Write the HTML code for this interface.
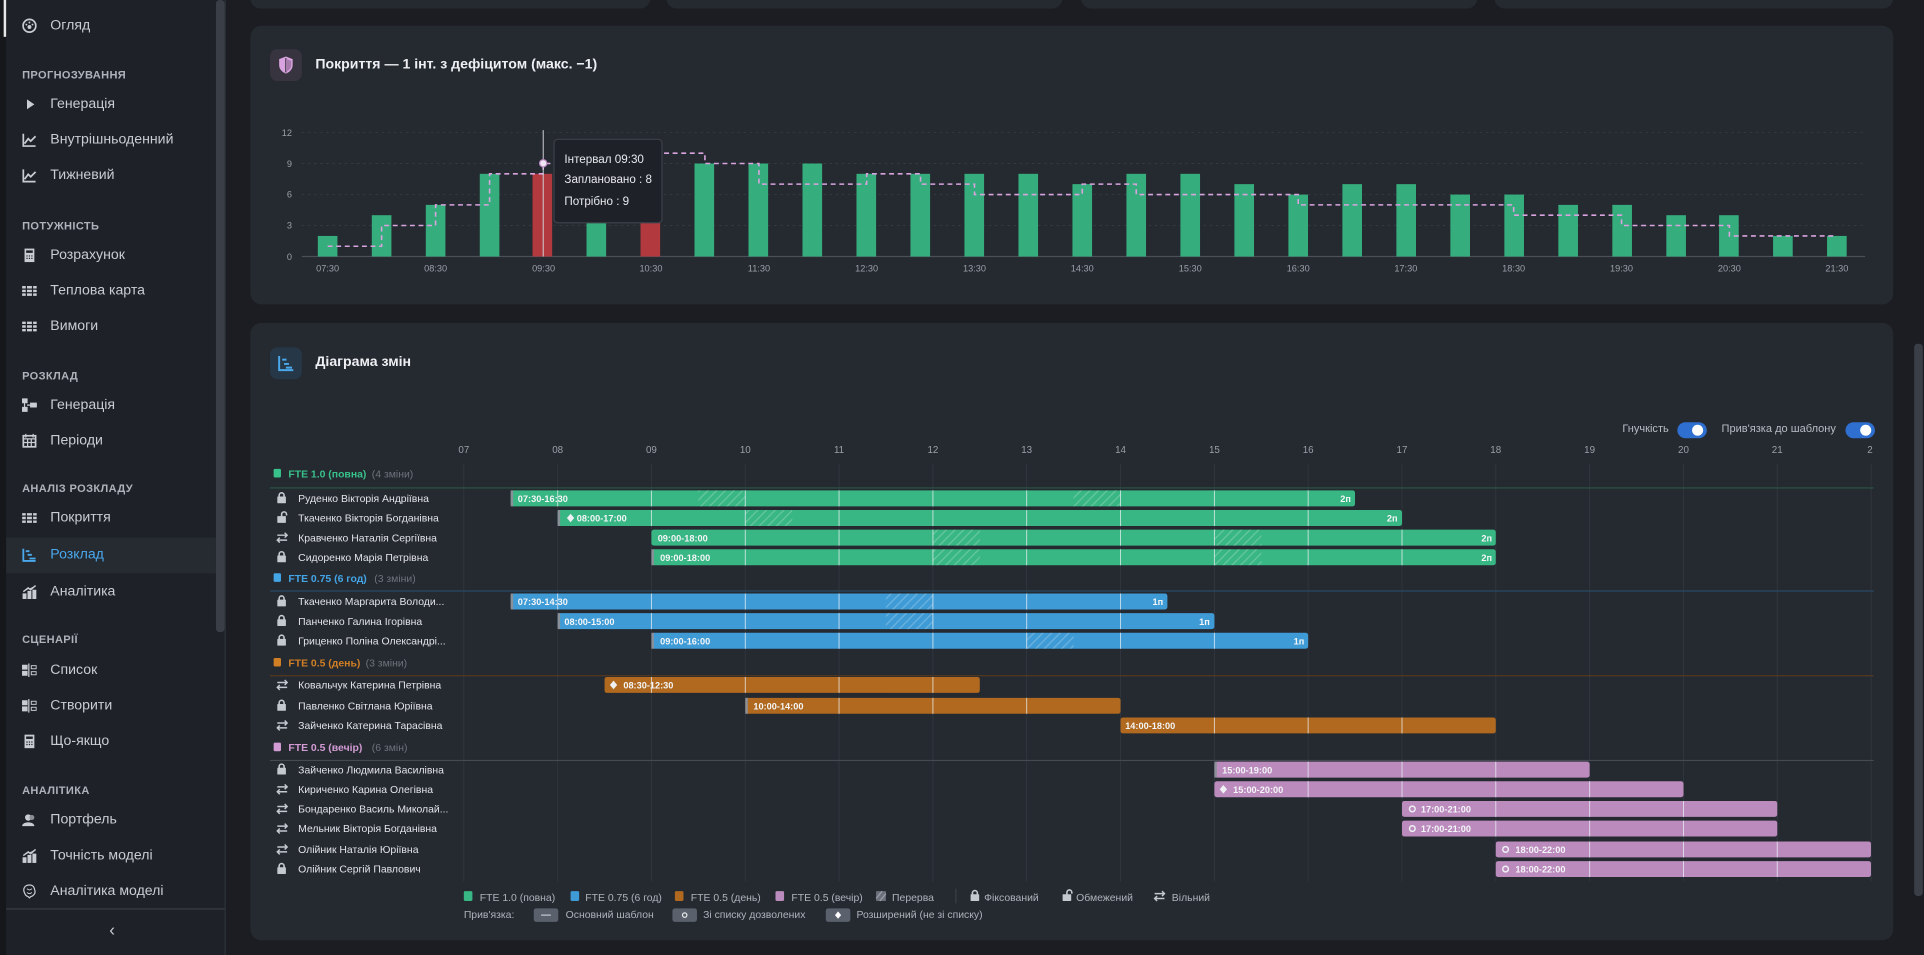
<!DOCTYPE html>
<html><head><meta charset="utf-8">
<style>
html,body{margin:0;padding:0;width:1924px;height:955px;overflow:hidden;background:#1b1d22;font-family:"Liberation Sans","DejaVu Sans",sans-serif;}
#s{position:absolute;left:0;top:0;width:1568px;height:778px;transform:scale(1.22704,1.2275);transform-origin:0 0;}
.sb{position:absolute;left:5px;top:0;width:179px;height:778px;background:#1e2128;}
.it{position:absolute;left:41px;font-size:11.5px;color:#c9ccd2;line-height:14px;}
.hd{position:absolute;left:18px;font-size:9px;font-weight:bold;color:#aeb2ba;letter-spacing:0.3px;}
.ic{position:absolute;left:18px;width:12px;height:12px;}
.card{position:absolute;background:#252930;border-radius:9px;}
</style></head><body>
<div id="s">
<div style="position:absolute;left:0;top:0;width:5px;height:778px;background:#15171b"></div>
<div class="sb"></div>
<div style="position:absolute;left:3px;top:0;width:2px;height:30px;background:#e8e8e8"></div>
<div style="position:absolute;left:176px;top:0;width:7px;height:515px;background:#3a3e46;border-radius:3px"></div>
<div style="position:absolute;left:183px;top:0;width:1px;height:778px;background:#2e3239"></div>
<!-- sidebar items -->
<svg class="ic" style="top:15px" viewBox="0 0 12 12"><circle cx="6" cy="6" r="5.2" fill="none" stroke="#c9ccd2" stroke-width="1.4"/><circle cx="6" cy="7" r="1.6" fill="#c9ccd2"/><circle cx="3.5" cy="5" r=".8" fill="#c9ccd2"/><circle cx="6" cy="3.3" r=".8" fill="#c9ccd2"/><circle cx="8.5" cy="5" r=".8" fill="#c9ccd2"/></svg>
<div class="it" style="top:14px">Огляд</div>
<div class="hd" style="top:56px">ПРОГНОЗУВАННЯ</div>
<svg class="ic" style="top:79px" viewBox="0 0 12 12"><path d="M4 2L10 6L4 10Z" fill="#c9ccd2"/></svg>
<div class="it" style="top:78px">Генерація</div>
<svg class="ic" style="top:108px" viewBox="0 0 12 12"><path d="M1 1V11H11M2 9L5 5L7 7L11 3" fill="none" stroke="#c9ccd2" stroke-width="1.4"/></svg>
<div class="it" style="top:107px">Внутрішньоденний</div>
<svg class="ic" style="top:137px" viewBox="0 0 12 12"><path d="M1 1V11H11M2 9L5 5L7 7L11 3" fill="none" stroke="#c9ccd2" stroke-width="1.4"/></svg>
<div class="it" style="top:136px">Тижневий</div>
<div class="hd" style="top:179px">ПОТУЖНІСТЬ</div>
<svg class="ic" style="top:202px" viewBox="0 0 12 12"><rect x="2" y="0.5" width="8" height="11" fill="#c9ccd2"/><rect x="3.3" y="2" width="5.4" height="2" fill="#1e2128"/><path d="M3.5 6h1v1h-1zM5.5 6h1v1h-1zM7.5 6h1v1h-1zM3.5 8h1v1h-1zM5.5 8h1v1h-1zM7.5 8h1v1h-1z" fill="#1e2128"/></svg>
<div class="it" style="top:201px">Розрахунок</div>
<svg class="ic" style="top:231px" viewBox="0 0 12 12"><path d="M0 2h3v2H0zM4 2h4v2H4zM9 2h3v2H9zM0 5h3v2H0zM4 5h4v2H4zM9 5h3v2H9zM0 8h3v2H0zM4 8h4v2H4zM9 8h3v2H9z" fill="#c9ccd2"/></svg>
<div class="it" style="top:230px">Теплова карта</div>
<svg class="ic" style="top:260px" viewBox="0 0 12 12"><path d="M0 2h3v2H0zM4 2h4v2H4zM9 2h3v2H9zM0 5h3v2H0zM4 5h4v2H4zM9 5h3v2H9zM0 8h3v2H0zM4 8h4v2H4zM9 8h3v2H9z" fill="#c9ccd2"/></svg>
<div class="it" style="top:259px">Вимоги</div>
<div class="hd" style="top:301px">РОЗКЛАД</div>
<svg class="ic" style="top:324px" viewBox="0 0 12 12"><path d="M0 1h4v3H0zM0 8h4v3H0zM7 4.5h5v3H7zM2 4v4M4 6h3" fill="#c9ccd2" stroke="#c9ccd2"/></svg>
<div class="it" style="top:323px">Генерація</div>
<svg class="ic" style="top:353px" viewBox="0 0 12 12"><rect x="1" y="2" width="10" height="9" fill="none" stroke="#c9ccd2" stroke-width="1.4"/><path d="M1 4.5h10M3 0.5v3M9 0.5v3M4.5 4v7M7.5 4v7M1 7.5h10" stroke="#c9ccd2"/></svg>
<div class="it" style="top:352px">Періоди</div>
<div class="hd" style="top:393px">АНАЛІЗ РОЗКЛАДУ</div>
<svg class="ic" style="top:416px" viewBox="0 0 12 12"><path d="M0 2h3v2H0zM4 2h4v2H4zM9 2h3v2H9zM0 5h3v2H0zM4 5h4v2H4zM9 5h3v2H9zM0 8h3v2H0zM4 8h4v2H4zM9 8h3v2H9z" fill="#c9ccd2"/></svg>
<div class="it" style="top:415px">Покриття</div>
<div style="position:absolute;left:5px;top:438px;width:171px;height:29px;background:#262a31"></div>
<svg class="ic" style="top:446px" viewBox="0 0 12 12"><path d="M1 1V11H11M3 3h3M4.5 6h3.5M6 9h5" fill="none" stroke="#4aa8ec" stroke-width="1.5"/></svg>
<div class="it" style="top:445px;color:#4aa8ec">Розклад</div>
<svg class="ic" style="top:476px" viewBox="0 0 12 12"><path d="M1 12V8h2v4zM5 12V6h2v6zM9 12V5h2v7zM1 6L5 3L7 4.5L11 1" fill="#c9ccd2" stroke="#c9ccd2" stroke-width="1.2"/></svg>
<div class="it" style="top:475px">Аналітика</div>
<div class="hd" style="top:516px">СЦЕНАРІЇ</div>
<svg class="ic" style="top:540px" viewBox="0 0 12 12"><path d="M0 2h4v3H0zM0 7h4v3H0zM5.5 0.5v11" fill="#c9ccd2" stroke="#c9ccd2"/><rect x="7.5" y="2.3" width="4" height="2.5" fill="none" stroke="#c9ccd2" stroke-width=".8"/><rect x="7.5" y="7.2" width="4" height="2.5" fill="none" stroke="#c9ccd2" stroke-width=".8"/></svg>
<div class="it" style="top:539px">Список</div>
<svg class="ic" style="top:569px" viewBox="0 0 12 12"><path d="M0 2h4v3H0zM0 7h4v3H0zM5.5 0.5v11" fill="#c9ccd2" stroke="#c9ccd2"/><rect x="7.5" y="2.3" width="4" height="2.5" fill="none" stroke="#c9ccd2" stroke-width=".8"/><rect x="7.5" y="7.2" width="4" height="2.5" fill="none" stroke="#c9ccd2" stroke-width=".8"/></svg>
<div class="it" style="top:568px">Створити</div>
<svg class="ic" style="top:598px" viewBox="0 0 12 12"><rect x="2" y="0.5" width="8" height="11" fill="#c9ccd2"/><rect x="3.3" y="2" width="5.4" height="2" fill="#1e2128"/><path d="M3.5 6h1v1h-1zM5.5 6h1v1h-1zM7.5 6h1v1h-1zM3.5 8h1v1h-1zM5.5 8h1v1h-1zM7.5 8h1v1h-1z" fill="#1e2128"/></svg>
<div class="it" style="top:597px">Що-якщо</div>
<div class="hd" style="top:639px">АНАЛІТИКА</div>
<svg class="ic" style="top:662px" viewBox="0 0 12 12"><circle cx="5" cy="4" r="2.6" fill="#c9ccd2"/><path d="M0 11c0-4 10-4 10 0z" fill="#c9ccd2"/><circle cx="8" cy="4" r="2" fill="#8a8e96"/></svg>
<div class="it" style="top:661px">Портфель</div>
<svg class="ic" style="top:691px" viewBox="0 0 12 12"><path d="M1 12V8h2v4zM5 12V6h2v6zM9 12V5h2v7zM1 6L5 3L7 4.5L11 1" fill="#c9ccd2" stroke="#c9ccd2" stroke-width="1.2"/></svg>
<div class="it" style="top:690px">Точність моделі</div>
<svg class="ic" style="top:720px" viewBox="0 0 12 12"><path d="M6 1C2 1 1 4 1.5 6S3 10 5 10.5L6 11.5L7 10.5C9 10 11 8 10.5 6S10 1 6 1Z" fill="none" stroke="#c9ccd2"/><path d="M4 4Q6 6 8 4M4 7Q6 9 8 7" fill="none" stroke="#c9ccd2" stroke-width=".7"/></svg>
<div class="it" style="top:719px">Аналітика моделі</div>
<div style="position:absolute;left:5px;top:740px;width:178px;height:1px;background:#3a3e46"></div>
<div style="position:absolute;left:89px;top:749px;font-size:14px;color:#c9ccd2">‹</div>

<!-- top cards -->
<div class="card" style="left:204px;top:-10px;width:326px;height:17px"></div>
<div class="card" style="left:543px;top:-10px;width:323px;height:17px"></div>
<div class="card" style="left:881px;top:-10px;width:323px;height:17px"></div>
<div class="card" style="left:1218px;top:-10px;width:325px;height:17px"></div>

<!-- coverage card -->
<div class="card" style="left:204px;top:21px;width:1339px;height:227px"></div>
<div style="position:absolute;left:220px;top:40px;width:26px;height:26px;border-radius:6px;background:#37343f"></div>
<svg style="position:absolute;left:226px;top:45px" width="14" height="16" viewBox="0 0 14 16"><path d="M7 1L1.5 3.2V8c0 3.5 2.5 5.8 5.5 7 3-1.2 5.5-3.5 5.5-7V3.2Z" fill="#d9a3df"/><path d="M7 2.5V14" stroke="#37343f" stroke-width="1.2"/><path d="M7 3L11.3 4.5V8C11.3 10.6 9.6 12.5 7 13.6Z" fill="#a77aac"/></svg>
<div style="position:absolute;left:257px;top:47px;font-size:11.5px;font-weight:bold;color:#eef0f3">Покриття — 1 інт. з дефіцитом (макс. −1)</div>
<svg style="position:absolute;left:0;top:0" width="1568" height="260" viewBox="0 0 1568 260">
<g stroke="#353a42" stroke-width="0.8" stroke-dasharray="2 3">
<line x1="246" y1="108" x2="1520" y2="108"/><line x1="246" y1="133.2" x2="1520" y2="133.2"/><line x1="246" y1="158.5" x2="1520" y2="158.5"/><line x1="246" y1="183.7" x2="1520" y2="183.7"/></g>
<line x1="246" y1="209" x2="1520" y2="209" stroke="#4a4f58" stroke-width="1"/>
<g font-size="7.5" fill="#9aa0a8" text-anchor="end"><text x="238" y="111">12</text><text x="238" y="136">9</text><text x="238" y="161">6</text><text x="238" y="186">3</text><text x="238" y="212">0</text></g>
<g fill="#36ad7c">
<rect x="259" y="192.2" width="16" height="16.8"/>
<rect x="303" y="175.3" width="16" height="33.7"/>
<rect x="347" y="166.9" width="16" height="42.1"/>
<rect x="391" y="141.6" width="16" height="67.4"/>
<rect x="478" y="124.8" width="16" height="84.2"/>
<rect x="566" y="133.2" width="16" height="75.8"/>
<rect x="610" y="133.2" width="16" height="75.8"/>
<rect x="654" y="133.2" width="16" height="75.8"/>
<rect x="698" y="141.6" width="16" height="67.4"/>
<rect x="742" y="141.6" width="16" height="67.4"/>
<rect x="786" y="141.6" width="16" height="67.4"/>
<rect x="830" y="141.6" width="16" height="67.4"/>
<rect x="874" y="150" width="16" height="59"/>
<rect x="918" y="141.6" width="16" height="67.4"/>
<rect x="962" y="141.6" width="16" height="67.4"/>
<rect x="1006" y="150" width="16" height="59"/>
<rect x="1050" y="158.5" width="16" height="50.5"/>
<rect x="1094" y="150" width="16" height="59"/>
<rect x="1138" y="150" width="16" height="59"/>
<rect x="1182" y="158.5" width="16" height="50.5"/>
<rect x="1226" y="158.5" width="16" height="50.5"/>
<rect x="1270" y="166.9" width="16" height="42.1"/>
<rect x="1314" y="166.9" width="16" height="42.1"/>
<rect x="1358" y="175.3" width="16" height="33.7"/>
<rect x="1401" y="175.3" width="16" height="33.7"/>
<rect x="1445" y="192.2" width="16" height="16.8"/>
<rect x="1489" y="192.2" width="16" height="16.8"/>
</g>
<g fill="#b23a3e"><rect x="434" y="141.6" width="16" height="67.4"/><rect x="522" y="133.2" width="16" height="75.8"/></g>
<path d="M267 200.6H311V183.7H355V166.9H399V141.6H442.7V133.2H486.7V124.8H574.5V133.2H618.5V150H706.3V141.6H750.2V150H794.2V158.5H882V150H926V158.5H1058V166.9H1233.6V175.3H1321.5V183.7H1409.4V192.2H1497" fill="none" stroke="#d9a3df" stroke-width="1.3" stroke-dasharray="4 3"/>
<g font-size="7.5" fill="#9aa0a8" text-anchor="middle">
<text x="267" y="221">07:30</text><text x="355" y="221">08:30</text><text x="443" y="221">09:30</text><text x="530.5" y="221">10:30</text><text x="618.5" y="221">11:30</text><text x="706.3" y="221">12:30</text><text x="794.2" y="221">13:30</text><text x="882" y="221">14:30</text><text x="970" y="221">15:30</text><text x="1058" y="221">16:30</text><text x="1145.7" y="221">17:30</text><text x="1233.6" y="221">18:30</text><text x="1321.5" y="221">19:30</text><text x="1409.4" y="221">20:30</text><text x="1497" y="221">21:30</text></g>
<line x1="442.7" y1="106" x2="442.7" y2="209" stroke="#d0d3d8" stroke-width="0.8"/>
<circle cx="442.7" cy="133" r="3" fill="#f1e6f3" stroke="#b888c0" stroke-width="1"/>
<rect x="451.5" y="113.5" width="88" height="68" rx="3" fill="#1e2128" stroke="#3c4049"/>
<g font-size="9.5" fill="#e8eaee"><text x="460" y="133">Інтервал 09:30</text><text x="460" y="149">Заплановано : 8</text><text x="460" y="167">Потрібно : 9</text></g>
</svg>

<!-- gantt card -->
<div class="card" style="left:204px;top:263px;width:1339px;height:503px"></div>
<div style="position:absolute;left:220px;top:283px;width:26px;height:26px;border-radius:6px;background:#263747"></div>
<svg style="position:absolute;left:226px;top:289px" width="14" height="14" viewBox="0 0 14 14"><path d="M1.5 1V12.5H13M4 4h3.5M5.5 7.5h4M7 10.5h5" fill="none" stroke="#4aa8ec" stroke-width="1.6"/></svg>
<div style="position:absolute;left:257px;top:289px;font-size:11.5px;font-weight:bold;color:#eef0f3">Діаграма змін</div>
<div style="position:absolute;left:1290px;top:344px;font-size:9px;color:#b8bcc4;width:70px;text-align:right">Гнучкість</div>
<div style="position:absolute;left:1367px;top:344px;width:24px;height:13px;border-radius:7px;background:#2f6fd0"></div>
<div style="position:absolute;left:1379px;top:346px;width:9px;height:9px;border-radius:5px;background:#fff"></div>
<div style="position:absolute;left:1403px;top:344px;font-size:9px;color:#b8bcc4">Прив'язка до шаблону</div>
<div style="position:absolute;left:1504px;top:344px;width:24px;height:13px;border-radius:7px;background:#2f6fd0"></div>
<div style="position:absolute;left:1516px;top:346px;width:9px;height:9px;border-radius:5px;background:#fff"></div>

<svg style="position:absolute;left:0;top:0" width="1568" height="778" viewBox="0 0 1568 778">
<defs>
<pattern id="h" width="5" height="5" patternUnits="userSpaceOnUse" patternTransform="rotate(45)"><rect width="5" height="5" fill="rgba(255,255,255,0.0)"/><line x1="0" y1="0" x2="0" y2="5" stroke="rgba(255,255,255,0.22)" stroke-width="2.2"/></pattern>
<g id="lk"><rect x="0" y="3.5" width="7" height="5.5" rx=".5" fill="#c4c8cf"/><path d="M1.5 4V2.5a2 2 0 0 1 4 0V4" fill="none" stroke="#c4c8cf" stroke-width="1.3"/></g>
<g id="ul"><rect x="0" y="3.5" width="7" height="5.5" rx=".5" fill="#c4c8cf"/><path d="M3.5 4V2a2 2 0 0 1 4 0V3" fill="none" stroke="#c4c8cf" stroke-width="1.3"/></g>
<g id="sw"><path d="M0 3H8M6 1L8 3L6 5M8 7H0M2 5L0 7L2 9" fill="none" stroke="#c4c8cf" stroke-width="1.2"/></g>
</defs>
<g font-size="8" fill="#9aa0a8" text-anchor="middle">
<text x="378" y="369">07</text><text x="454.5" y="369">08</text><text x="530.9" y="369">09</text><text x="607.4" y="369">10</text><text x="683.8" y="369">11</text><text x="760.3" y="369">12</text><text x="836.7" y="369">13</text><text x="913.2" y="369">14</text><text x="989.7" y="369">15</text><text x="1066.1" y="369">16</text><text x="1142.6" y="369">17</text><text x="1219" y="369">18</text><text x="1295.5" y="369">19</text><text x="1372" y="369">20</text><text x="1448.4" y="369">21</text><text x="1524" y="369">2</text></g>
<g stroke="#31363e" stroke-width="0.8">
<line x1="378" y1="378" x2="378" y2="718"/><line x1="454.5" y1="378" x2="454.5" y2="718"/><line x1="530.9" y1="378" x2="530.9" y2="718"/><line x1="607.4" y1="378" x2="607.4" y2="718"/><line x1="683.8" y1="378" x2="683.8" y2="718"/><line x1="760.3" y1="378" x2="760.3" y2="718"/><line x1="836.7" y1="378" x2="836.7" y2="718"/><line x1="913.2" y1="378" x2="913.2" y2="718"/><line x1="989.7" y1="378" x2="989.7" y2="718"/><line x1="1066.1" y1="378" x2="1066.1" y2="718"/><line x1="1142.6" y1="378" x2="1142.6" y2="718"/><line x1="1219" y1="378" x2="1219" y2="718"/><line x1="1295.5" y1="378" x2="1295.5" y2="718"/><line x1="1372" y1="378" x2="1372" y2="718"/><line x1="1448.4" y1="378" x2="1448.4" y2="718"/><line x1="1524.9" y1="378" x2="1524.9" y2="718"/></g>
<line x1="220" y1="397.5" x2="1527" y2="397.5" stroke="#2b5746" stroke-width="1"/>
<line x1="220" y1="481.5" x2="1527" y2="481.5" stroke="#2a4a64" stroke-width="1"/>
<line x1="220" y1="550.5" x2="1527" y2="550.5" stroke="#55391f" stroke-width="1"/>
<line x1="220" y1="619.5" x2="1527" y2="619.5" stroke="#454a53" stroke-width="1"/>
<!-- group headers -->
<g font-size="8.5">
<rect x="223" y="382" width="6" height="7" rx="1" fill="#38c18a"/><text x="235" y="389" fill="#38c18a" font-weight="bold">FTE 1.0 (повна)</text><text x="303" y="389" fill="#6e747d">(4 зміни)</text>
<rect x="223" y="467" width="6" height="7" rx="1" fill="#43a5e6"/><text x="235" y="474" fill="#43a5e6" font-weight="bold">FTE 0.75 (6 год)</text><text x="305" y="474" fill="#6e747d">(3 зміни)</text>
<rect x="223" y="536" width="6" height="7" rx="1" fill="#d17f25"/><text x="235" y="543" fill="#d17f25" font-weight="bold">FTE 0.5 (день)</text><text x="298" y="543" fill="#6e747d">(3 зміни)</text>
<rect x="223" y="605" width="6" height="7" rx="1" fill="#d29bd4"/><text x="235" y="612" fill="#d29bd4" font-weight="bold">FTE 0.5 (вечір)</text><text x="303" y="612" fill="#6e747d">(6 змін)</text>
</g>
<!-- names -->
<g font-size="8.5" fill="#e2e4e8">
<text x="243" y="409">Руденко Вікторія Андріївна</text>
<text x="243" y="425">Ткаченко Вікторія Богданівна</text>
<text x="243" y="441">Кравченко Наталія Сергіївна</text>
<text x="243" y="457">Сидоренко Марія Петрівна</text>
<text x="243" y="493">Ткаченко Маргарита Володи...</text>
<text x="243" y="509">Панченко Галина Ігорівна</text>
<text x="243" y="525">Гриценко Поліна Олександрі...</text>
<text x="243" y="561">Ковальчук Катерина Петрівна</text>
<text x="243" y="578">Павленко Світлана Юріївна</text>
<text x="243" y="594">Зайченко Катерина Тарасівна</text>
<text x="243" y="630">Зайченко Людмила Василівна</text>
<text x="243" y="646">Кириченко Карина Олегівна</text>
<text x="243" y="662">Бондаренко Василь Миколай...</text>
<text x="243" y="678">Мельник Вікторія Богданівна</text>
<text x="243" y="695">Олійник Наталія Юріївна</text>
<text x="243" y="711">Олійник Сергій Павлович</text>
</g>
<use href="#lk" x="226" y="401"/><use href="#ul" x="226" y="417"/><use href="#sw" x="226" y="433"/><use href="#lk" x="226" y="449"/>
<use href="#lk" x="226" y="485"/><use href="#lk" x="226" y="501"/><use href="#lk" x="226" y="517"/>
<use href="#sw" x="226" y="553"/><use href="#lk" x="226" y="570"/><use href="#sw" x="226" y="586"/>
<use href="#lk" x="226" y="622"/><use href="#sw" x="226" y="638"/><use href="#sw" x="226" y="654"/><use href="#sw" x="226" y="670"/><use href="#sw" x="226" y="687"/><use href="#lk" x="226" y="703"/>
<!-- bars -->
<g fill="#38b683">
<rect x="416.2" y="399.5" width="688.1" height="13" rx="2"/>
<rect x="454.5" y="415.5" width="688.1" height="13" rx="2"/>
<rect x="530.9" y="431.5" width="688.1" height="13" rx="2"/>
<rect x="530.9" y="447.5" width="688.1" height="13" rx="2"/>
</g>
<g fill="#3f9bd6">
<rect x="416.2" y="483.5" width="535.2" height="13" rx="2"/>
<rect x="454.5" y="499.5" width="535.2" height="13" rx="2"/>
<rect x="530.9" y="515.5" width="535.2" height="13" rx="2"/>
</g>
<g fill="#b0691e">
<rect x="492.7" y="551.5" width="305.8" height="13" rx="2"/>
<rect x="607.4" y="568.5" width="305.8" height="13" rx="2"/>
<rect x="913.2" y="584.5" width="305.8" height="13" rx="2"/>
</g>
<g fill="#bb8bbd">
<rect x="989.7" y="620.5" width="305.8" height="13" rx="2"/>
<rect x="989.7" y="636.5" width="382.3" height="13" rx="2"/>
<rect x="1142.6" y="652.5" width="305.8" height="13" rx="2"/>
<rect x="1142.6" y="668.5" width="305.8" height="13" rx="2"/>
<rect x="1219" y="685.5" width="305.8" height="13" rx="2"/>
<rect x="1219" y="701.5" width="305.8" height="13" rx="2"/>
</g>
<!-- left gray edges -->
<g fill="#8a8f98">
<rect x="416.2" y="399.5" width="2" height="13"/><rect x="454.5" y="415.5" width="2" height="13"/><rect x="530.9" y="447.5" width="2" height="13"/>
<rect x="416.2" y="483.5" width="2" height="13"/><rect x="454.5" y="499.5" width="2" height="13"/><rect x="530.9" y="515.5" width="2" height="13"/>
<rect x="607.4" y="568.5" width="2" height="13"/><rect x="989.7" y="620.5" width="2" height="13"/>
</g>
<!-- breaks -->
<g fill="url(#h)">
<rect x="569.1" y="399.5" width="38.3" height="13"/><rect x="874.9" y="399.5" width="38.3" height="13"/>
<rect x="607.4" y="415.5" width="38.3" height="13"/>
<rect x="760.3" y="431.5" width="38.3" height="13"/><rect x="989.7" y="431.5" width="38.3" height="13"/>
<rect x="760.3" y="447.5" width="38.3" height="13"/><rect x="989.7" y="447.5" width="38.3" height="13"/>
<rect x="722" y="483.5" width="38.3" height="13"/>
<rect x="722" y="499.5" width="38.3" height="13"/>
<rect x="836.7" y="515.5" width="38.3" height="13"/>
</g>
<!-- hour separators within bars -->
<g stroke="rgba(235,240,245,0.75)" stroke-width="0.8">
<path d="M454.5 399.5v13M530.9 399.5v13M607.4 399.5v13M683.8 399.5v13M760.3 399.5v13M836.7 399.5v13M913.2 399.5v13M989.7 399.5v13M1066.1 399.5v13"/>
<path d="M530.9 415.5v13M607.4 415.5v13M683.8 415.5v13M760.3 415.5v13M836.7 415.5v13M913.2 415.5v13M989.7 415.5v13M1066.1 415.5v13"/>
<path d="M607.4 431.5v13M683.8 431.5v13M760.3 431.5v13M836.7 431.5v13M913.2 431.5v13M989.7 431.5v13M1066.1 431.5v13M1142.6 431.5v13"/>
<path d="M607.4 447.5v13M683.8 447.5v13M760.3 447.5v13M836.7 447.5v13M913.2 447.5v13M989.7 447.5v13M1066.1 447.5v13M1142.6 447.5v13"/>
<path d="M454.5 483.5v13M530.9 483.5v13M607.4 483.5v13M683.8 483.5v13M760.3 483.5v13M836.7 483.5v13M913.2 483.5v13"/>
<path d="M530.9 499.5v13M607.4 499.5v13M683.8 499.5v13M760.3 499.5v13M836.7 499.5v13M913.2 499.5v13"/>
<path d="M607.4 515.5v13M683.8 515.5v13M760.3 515.5v13M836.7 515.5v13M913.2 515.5v13M989.7 515.5v13"/>
<path d="M530.9 551.5v13M607.4 551.5v13M683.8 551.5v13M760.3 551.5v13"/>
<path d="M683.8 568.5v13M760.3 568.5v13M836.7 568.5v13"/>
<path d="M989.7 584.5v13M1066.1 584.5v13M1142.6 584.5v13"/>
<path d="M1066.1 620.5v13M1142.6 620.5v13M1219 620.5v13"/>
<path d="M1066.1 636.5v13M1142.6 636.5v13M1219 636.5v13M1295.5 636.5v13"/>
<path d="M1219 652.5v13M1295.5 652.5v13M1372 652.5v13"/>
<path d="M1219 668.5v13M1295.5 668.5v13M1372 668.5v13"/>
<path d="M1295.5 685.5v13M1372 685.5v13M1448.4 685.5v13"/>
<path d="M1295.5 701.5v13M1372 701.5v13M1448.4 701.5v13"/>
</g>
<!-- markers -->
<g fill="#eef0f3">
<path d="M465 418.5l3 3.5-3 3.5-3-3.5z"/>
<path d="M500 554.5l3 3.5-3 3.5-3-3.5z"/>
<path d="M997 639.5l3 3.5-3 3.5-3-3.5z"/>
</g>
<g fill="none" stroke="#eef0f3" stroke-width="1.2">
<circle cx="1151" cy="659" r="2.3"/><circle cx="1151" cy="675" r="2.3"/><circle cx="1227" cy="692" r="2.3"/><circle cx="1227" cy="708" r="2.3"/>
</g>
<g font-size="7.5" font-weight="bold" fill="#f4f6f8">
<text x="422" y="409">07:30-16:30</text>
<text x="470" y="425">08:00-17:00</text>
<text x="536" y="441">09:00-18:00</text>
<text x="538" y="457">09:00-18:00</text>
<text x="422" y="493">07:30-14:30</text>
<text x="460" y="509">08:00-15:00</text>
<text x="538" y="525">09:00-16:00</text>
<text x="508" y="561">08:30-12:30</text>
<text x="614" y="578">10:00-14:00</text>
<text x="917" y="594">14:00-18:00</text>
<text x="996" y="630">15:00-19:00</text>
<text x="1005" y="646">15:00-20:00</text>
<text x="1158" y="662">17:00-21:00</text>
<text x="1158" y="678">17:00-21:00</text>
<text x="1235" y="695">18:00-22:00</text>
<text x="1235" y="711">18:00-22:00</text>
<g text-anchor="end"><text x="1101" y="409">2п</text><text x="1139" y="425">2п</text><text x="1216" y="441">2п</text><text x="1216" y="457">2п</text><text x="948" y="493">1п</text><text x="986" y="509">1п</text><text x="1063" y="525">1п</text></g>
</g>
<!-- legend -->
<g font-size="8.5" fill="#aeb3bb">
<rect x="378" y="726" width="7" height="8" rx="1" fill="#38b683"/><text x="391" y="734">FTE 1.0 (повна)</text>
<rect x="465" y="726" width="7" height="8" rx="1" fill="#3f9bd6"/><text x="477" y="734">FTE 0.75 (6 год)</text>
<rect x="550" y="726" width="7" height="8" rx="1" fill="#b0691e"/><text x="563" y="734">FTE 0.5 (день)</text>
<rect x="632" y="726" width="7" height="8" rx="1" fill="#bb8bbd"/><text x="645" y="734">FTE 0.5 (вечір)</text>
<rect x="714" y="726" width="8" height="8" fill="#6b707a"/><path d="M714 732l5-6M717 734l5-6" stroke="#9aa0a8" stroke-width="1"/><text x="727" y="734">Перерва</text>
<line x1="779" y1="724" x2="779" y2="736" stroke="#3a3f47"/>
<use href="#lk" x="791" y="725"/><text x="802" y="734">Фіксований</text>
<use href="#ul" x="866" y="725"/><text x="877" y="734">Обмежений</text>
<use href="#sw" x="941" y="725"/><text x="955" y="734">Вільний</text>
<text x="378" y="748">Прив'язка:</text>
<rect x="435" y="740" width="20" height="11" rx="2" fill="#5b616c"/><line x1="441" y1="745.5" x2="449" y2="745.5" stroke="#c4c8cf"/><text x="461" y="748">Основний шаблон</text>
<rect x="548" y="740" width="20" height="11" rx="2" fill="#5b616c"/><circle cx="558" cy="745.5" r="1.8" fill="none" stroke="#e8eaee"/><text x="573" y="748">Зі списку дозволених</text>
<rect x="673" y="740" width="20" height="11" rx="2" fill="#5b616c"/><path d="M683 742.5l2.5 3-2.5 3-2.5-3z" fill="#fff"/><text x="698" y="748">Розширений (не зі списку)</text>
</g>
</svg>
<div style="position:absolute;left:1560px;top:280px;width:7px;height:450px;background:#3a3e46;border-radius:3px"></div>
</div>
</body></html>
